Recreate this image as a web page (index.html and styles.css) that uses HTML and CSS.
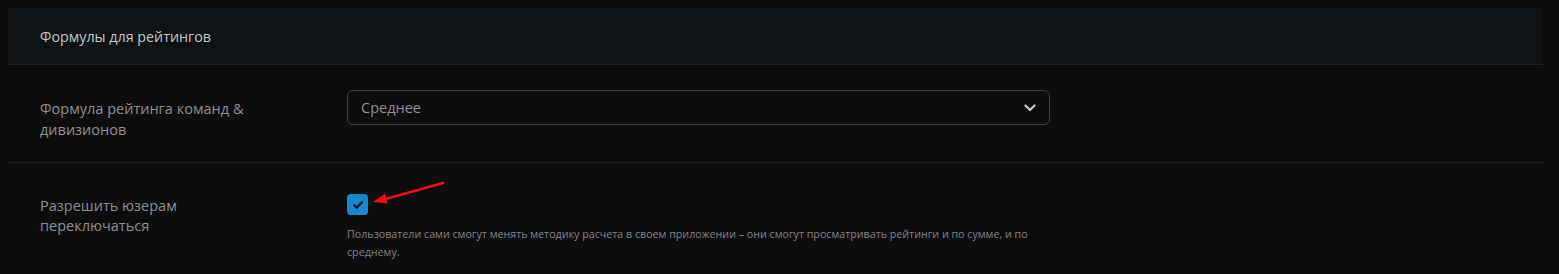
FILE: index.html
```html
<!DOCTYPE html>
<html lang="ru">
<head>
<meta charset="utf-8">
<link rel="stylesheet" href="styles.css">
</head>
<body>
<div class="card">
  <div class="card-header">Формулы для рейтингов</div>
  <div class="row row-select">
    <div class="label">Формула рейтинга команд &amp;<br>дивизионов</div>
    <div class="control">
      <div class="select">
        <span>Среднее</span>
        <svg class="chev" width="12" height="8" viewBox="0 0 12 8"><path d="M1.5 1.5 L6 6 L10.5 1.5" fill="none" stroke="#c8c8c8" stroke-width="2.2" stroke-linecap="round" stroke-linejoin="round"/></svg>
      </div>
    </div>
  </div>
  <div class="row row-check">
    <div class="label">Разрешить юзерам<br>переключаться</div>
    <div class="control">
      <div class="checkbox">
        <svg width="12" height="10" viewBox="0 0 12 10"><path d="M2 5.2 L4.6 7.6 L10 2.4" fill="none" stroke="#101820" stroke-width="2.4" stroke-linecap="round" stroke-linejoin="round"/></svg>
      </div>
      <div class="help">Пользователи сами смогут менять методику расчета в своем приложении – они смогут просматривать рейтинги и по сумме, и по среднему.</div>
      <svg class="arrow" width="80" height="30" viewBox="0 0 80 30"><path d="M73 2 L12 19" stroke="#ea1219" stroke-width="2.8" stroke-linecap="round"/><path d="M3 21 L15 12.5 L17.5 22.5 Z" fill="#ea1219"/></svg>
    </div>
  </div>
</div>
</body>
</html>
```

FILE: styles.css
```css
html, body {
  margin: 0;
  padding: 0;
  background: #0d0d0e;
}
body {
  padding: 8px;
  font-family: "Open Sans", "Noto Sans", sans-serif;
  font-size: 14px;
}
.card {
  width: 1535px;
}
.card-header {
  height: 57px;
  background: #0f1316;
  border-bottom: 1px solid #1e2225;
  color: #c3c5c7;
  font-size: 14.3px;
  padding: 0 32px;
  display: flex;
  align-items: center;
  box-sizing: border-box;
}
.row {
  display: grid;
  grid-template-columns: 307px 703px;
  padding: 0 32px;
  border-bottom: 1px solid #1e2225;
}
.row-select {
  height: 98px;
  padding-top: 25px;
  box-sizing: border-box;
}
.row-check {
  height: 120px;
  padding-top: 31px;
  box-sizing: border-box;
  border-bottom: none;
}
.label {
  color: #8d8f91;
  font-size: 14.5px;
  line-height: 21px;
}
.row-select .label {
  padding-top: 8px;
}
.row-check .label {
  padding-top: 2px;
  line-height: 20px;
}
.control {
  position: relative;
}
.select {
  height: 35px;
  box-sizing: border-box;
  border: 1px solid #3a3f43;
  border-radius: 6px;
  display: flex;
  align-items: center;
  justify-content: space-between;
  padding: 0 13px;
  color: #8d8f91;
  font-size: 14.5px;
}
.checkbox {
  width: 21px;
  height: 21px;
  border-radius: 4px;
  background: #1787d0;
  display: flex;
  align-items: center;
  justify-content: center;
}
.help {
  margin-top: 10px;
  color: #828486;
  font-size: 10.7px;
  line-height: 18px;
  width: 703px;
}
.arrow {
  position: absolute;
  left: 23px;
  top: -13px;
}
```
